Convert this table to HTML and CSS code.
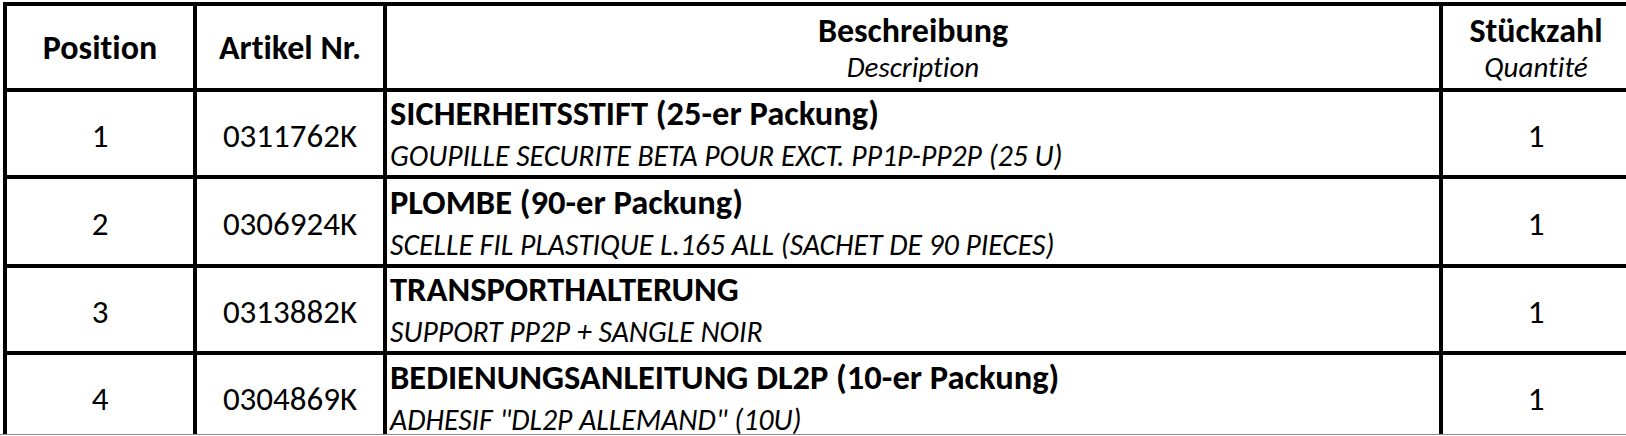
FILE: index.html
```html
<!DOCTYPE html>
<html lang="de">
<head>
<meta charset="utf-8">
<title>Stückliste</title>
<link rel="stylesheet" href="styles.css">
</head>
<body>
<div class="sheet">
  <div class="parts" role="table">
    <div class="cell head single" role="columnheader"><span class="de">Position</span></div>
    <div class="cell head single" role="columnheader"><span class="de">Artikel Nr.</span></div>
    <div class="cell head double" role="columnheader"><span class="de">Beschreibung</span><span class="fr">Description</span></div>
    <div class="cell head double" role="columnheader"><span class="de">Stückzahl</span><span class="fr">Quantité</span></div>

    <div class="cell num" role="cell">1</div>
    <div class="cell num" role="cell">0311762K</div>
    <div class="cell desc" role="cell"><span class="de">SICHERHEITSSTIFT (25-er Packung)</span><span class="fr">GOUPILLE SECURITE BETA POUR EXCT. PP1P-PP2P (25 U)</span></div>
    <div class="cell num" role="cell">1</div>

    <div class="cell num" role="cell">2</div>
    <div class="cell num" role="cell">0306924K</div>
    <div class="cell desc" role="cell"><span class="de">PLOMBE (90-er Packung)</span><span class="fr">SCELLE FIL PLASTIQUE L.165 ALL (SACHET DE 90 PIECES)</span></div>
    <div class="cell num" role="cell">1</div>

    <div class="cell num" role="cell">3</div>
    <div class="cell num" role="cell">0313882K</div>
    <div class="cell desc" role="cell"><span class="de">TRANSPORTHALTERUNG</span><span class="fr">SUPPORT PP2P + SANGLE NOIR</span></div>
    <div class="cell num" role="cell">1</div>

    <div class="cell num" role="cell">4</div>
    <div class="cell num" role="cell">0304869K</div>
    <div class="cell desc" role="cell"><span class="de">BEDIENUNGSANLEITUNG DL2P (10-er Packung)</span><span class="fr">ADHESIF "DL2P ALLEMAND" (10U)</span></div>
    <div class="cell num" role="cell">1</div>
  </div>
</div>
</body>
</html>
```

FILE: styles.css
```css
html, body {
  margin: 0;
  padding: 0;
  background: #fff;
}

body {
  font-family: Carlito, Calibri, Lato, "Liberation Sans", sans-serif;
  font-variant-ligatures: none;
  font-feature-settings: "liga" 0, "clig" 0;
  color: #000;
  overflow: hidden;
  height: 436px;
}

.sheet {
  box-sizing: border-box;
  height: 435px;
  padding: 2px 0 0 3px;
  overflow: hidden;
  border-bottom: 1px solid #8c8c8c;
}

.parts {
  display: grid;
  grid-template-columns: 186px 186px 1052px 186px;
  grid-template-rows: 82px 83px 85px 83px 84px;
  gap: 4px;
  padding: 4px;
  background: #000;
  width: max-content;
}

.cell {
  background: #fff;
  display: flex;
  flex-direction: column;
  min-width: 0;
  white-space: nowrap;
}

.de {
  display: block;
}

.fr {
  display: block;
  font-style: italic;
}

.head {
  align-items: center;
  font-weight: 700;
}

.head.single {
  justify-content: center;
  font-size: 34px;
  line-height: 40px;
  padding-top: 1px;
}

.head.double {
  justify-content: flex-start;
  padding-top: 6px;
}

.head.double .de {
  font-size: 34px;
  line-height: 38px;
}

.head.double .fr {
  font-size: 29px;
  font-weight: 400;
  line-height: 34px;
}

.num {
  align-items: center;
  justify-content: center;
  font-size: 33px;
  line-height: 40px;
  padding-top: 4px;
}

.desc {
  justify-content: flex-end;
  align-items: flex-start;
  padding: 0 0 1px 3px;
}

.desc .de {
  font-size: 34.5px;
  font-weight: 700;
  line-height: 40px;
}

.desc .fr {
  font-size: 29.7px;
  line-height: 36px;
  margin-top: 5px;
}
```
